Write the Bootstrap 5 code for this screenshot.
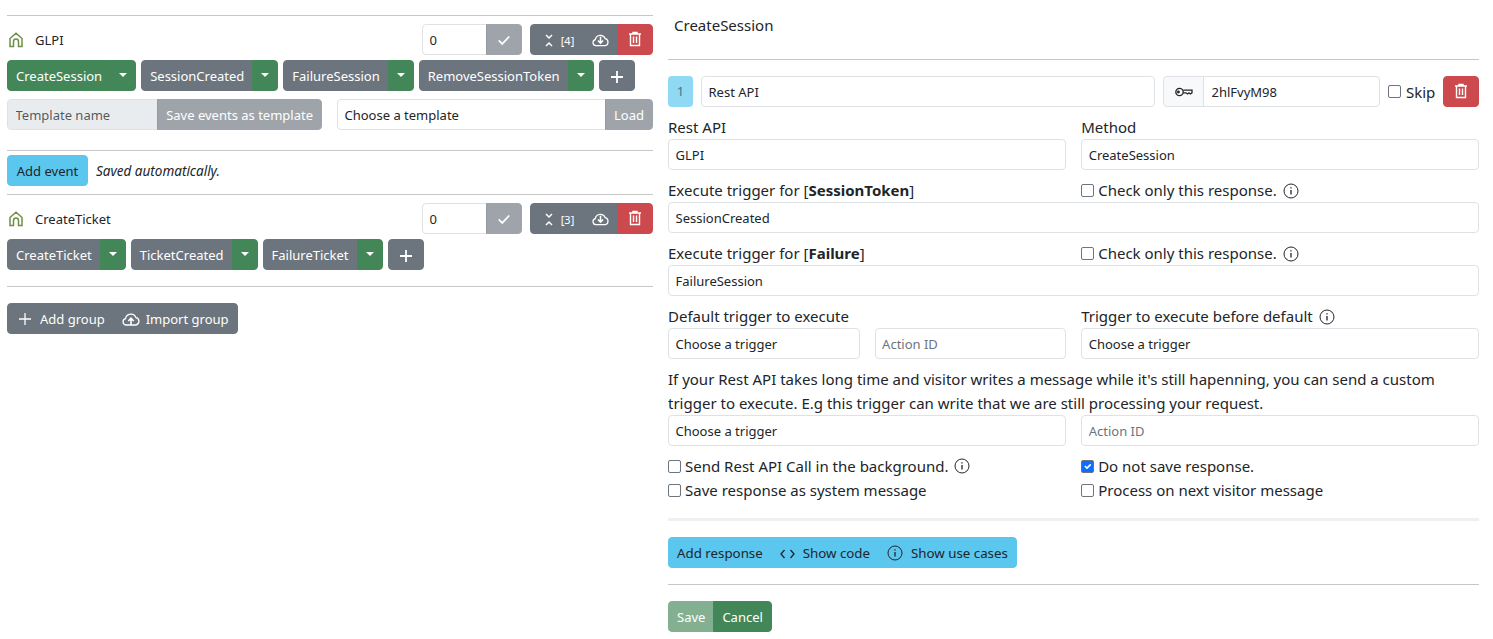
<!DOCTYPE html>
<html>
<head>
  <title>Rest API events</title>
  <link href="https://cdn.jsdelivr.net/npm/bootstrap@5.3.1/dist/css/bootstrap.min.css" rel="stylesheet">
  <style>
    body { font-family: "Noto Sans", sans-serif; font-size: 15px; line-height: 24px; color: #212529; background: #fff; }
    .btn-sm, .btn-group-sm > .btn, .form-control-sm, .input-group-sm > .btn, .input-group-sm > .form-control, .input-group-sm > .input-group-text { font-size: 13px; line-height: 21px; --bs-btn-font-size: 13px; }
    .btn-sm, .btn-group-sm > .btn, .input-group-sm > .btn { padding-top: 5px; padding-bottom: 3px; }
    .form-control-sm, .input-group-sm > .form-control { padding: 5px 6.5px 3px; min-height: 31px; }
    .form-control-sm::placeholder { color: #6c757d; }
    hr { margin: 0; border-top: 1px solid #000; opacity: .22; }
    svg { vertical-align: -2px; }
    .wrap { display: flex; gap: 15px; padding: 0 14px 0 7px; }
    .left-pane { width: 646px; flex: none; padding-top: 15px; }
    .right-pane { flex: 1; padding-top: 13px; }
    .group-head { display: flex; align-items: center; height: 31px; }
    .group-icon { margin-left: 2px; }
    .group-name { font-size: 13px; line-height: 21px; margin: 2px 0 0 12px; }
    .count-box { width: 100px; }
    .tool-box { width: 123px; margin-left: 8px; }
    .btn-group-sm > .btn.tool-fold { padding-left: 5px; }
    .tag-count { font-size: 11px; }
    .btn-grn { --bs-btn-color: #fff; --bs-btn-bg: #438759; --bs-btn-border-color: #438759; --bs-btn-hover-color: #fff; --bs-btn-hover-bg: #3a7a4e; --bs-btn-hover-border-color: #3a7a4e; --bs-btn-disabled-color: #fff; --bs-btn-disabled-bg: #438759; --bs-btn-disabled-border-color: #438759; }
    .btn-gry { --bs-btn-color: #fff; --bs-btn-bg: #6c757d; --bs-btn-border-color: #6c757d; --bs-btn-disabled-color: #fff; --bs-btn-disabled-bg: #6c757d; --bs-btn-disabled-border-color: #6c757d; }
    .btn-sky { --bs-btn-color: #212529; --bs-btn-bg: #5bc6ee; --bs-btn-border-color: #5bc6ee; --bs-btn-hover-color: #212529; --bs-btn-hover-bg: #4cb9e2; --bs-btn-hover-border-color: #4cb9e2; }
    .btn-red { --bs-btn-color: #fff; --bs-btn-bg: #cc4a4d; --bs-btn-border-color: #cc4a4d; --bs-btn-hover-color: #fff; --bs-btn-hover-bg: #b94144; --bs-btn-hover-border-color: #b94144; }
    .btn-group-sm > .btn.dropdown-toggle-split { width: 26px; flex: none; padding: 4px 0; }
    .dropdown-toggle::after { border-top-width: 4px; border-left-width: 4px; border-right-width: 4px; }
    .event-row { display: flex; gap: 5px; margin-top: 5px; }
    .template-row { display: flex; gap: 15px; margin-top: 8px; }
    .template-name { width: 315px; flex: none; }
    .template-name > .form-control { padding-left: 7.5px; }
    .add-row { display: flex; align-items: center; margin: 4px 0 8px; }
    .add-event { width: 81px; }
    .note { font-size: 13.5px; font-style: italic; margin-left: 8px; }
    .btn-group-sm > .btn.add-group { padding-left: 11px; padding-right: 8px; }
    .btn-group-sm > .btn.add-group svg { margin-right: 9px; }
    .import-group svg { margin-right: 6px; }
    .head-title { font-size: 15px; line-height: 24px; margin: 0 0 22px 6px; }
    .num-tag { width: 25px; height: 31px; flex: none; background: #90d9f4; color: #41758a; border-radius: 4px; font-size: 13px; line-height: 31px; text-align: center; }
    .top-row { display: flex; gap: 8px; align-items: center; margin: 16px 0 11px; }
    .top-row .api-name { width: 454px; flex: none; }
    .top-row .key-box { width: 217px; flex: none; }
    .key-box .input-group-text { width: 41px; justify-content: center; padding: 0; background: #f8f9fa; }
    .key-box > .form-control { padding-left: 7.5px; }
    .skip-box { display: flex; align-items: center; }
    .skip-box .form-check-input { margin: 0 5px 0 0; width: 13px; height: 13px; border-radius: 2px; border-color: #6c757d; }
    .form-line { --bs-gutter-x: 15px; --bs-gutter-y: 0; margin-bottom: 11px; }
    .line-label { display: block; line-height: 19px; padding-bottom: 2px; }
    .chk { display: flex; align-items: center; line-height: 19px; padding-bottom: 2px; }
    .chk .form-check-input { width: 13px; height: 13px; margin: 0 4px 0 0; border-radius: 2px; flex: none; border-color: #6c757d; }
    .chk svg { margin-left: 6px; }
    .help-text { margin: -3px 0 0; line-height: 24px; }
    .chk-lines { --bs-gutter-x: 15px; margin-top: 8px; margin-bottom: 16px; }
    .chk-lines .chk { line-height: 24px; padding-bottom: 0; }
    .thick-line { border-top: 3px solid #000; opacity: .06; }
    .resp-group { margin: 16px 0; }
    .resp-group > .btn { font-size: 13.3px; --bs-btn-font-size: 13.3px; }
  </style>
</head>
<body>
<div class="wrap">
  <div class="left-pane">
    <hr>
    <div class="group-head mt-2">
      <svg width="14" height="16" viewBox="0 0 14 16" fill="none" stroke="#6f8f46" stroke-width="1.5" class="group-icon"><path d="M1 6.5 7 1.2l6 5.3v8H9.5V9.5a2.5 2.5 0 0 0-5 0v5H1z"/></svg>
      <span class="group-name">GLPI</span>
      <div class="input-group input-group-sm count-box ms-auto">
        <input class="form-control" value="0">
        <button class="btn btn-gry px-0" disabled style="width:36px"><svg width="14" height="14" viewBox="0 0 16 16" fill="none" stroke="#fff" stroke-width="2"><path d="M2 8.5 6 12.5 14 4"/></svg></button>
      </div>
      <div class="btn-group btn-group-sm tool-box">
        <button class="btn btn-gry tool-fold pe-0 d-flex align-items-center justify-content-center gap-2"><svg width="8" height="13" viewBox="0 0 8 13" fill="none" stroke="#fff" stroke-width="1.5"><path d="M1 1 4 4 7 1M1 12 4 9 7 12"/></svg><span class="tag-count">[4]</span></button>
        <button class="btn btn-gry px-0" style="flex:none;width:35px"><svg width="17" height="14" viewBox="0 0 18 14" fill="none" stroke="#fff" stroke-width="1.3"><path d="M4.5 13H4a3.2 3.2 0 0 1-.5-6.3A5.5 5.5 0 0 1 14 5.6 3.8 3.8 0 0 1 14 13H4.5z"/><path d="M9 3.5V10M6.3 7.5 9 10.3l2.7-2.8" stroke-width="1.6"/></svg></button>
        <button class="btn btn-red px-0" style="flex:none;width:36px"><svg width="14" height="16" viewBox="0 0 14 16" fill="none" stroke="#fff" stroke-width="1.4"><path d="M1 3h12M5 3V1.5h4V3M2.5 3v11.5h9V3M5.5 5.5v6.5M8.5 5.5v6.5"/></svg></button>
      </div>
    </div>
    <div class="event-row">
      <div class="btn-group btn-group-sm"><button class="btn btn-grn">CreateSession</button><button class="btn btn-grn dropdown-toggle dropdown-toggle-split"></button></div>
      <div class="btn-group btn-group-sm"><button class="btn btn-gry">SessionCreated</button><button class="btn btn-grn dropdown-toggle dropdown-toggle-split"></button></div>
      <div class="btn-group btn-group-sm"><button class="btn btn-gry">FailureSession</button><button class="btn btn-grn dropdown-toggle dropdown-toggle-split"></button></div>
      <div class="btn-group btn-group-sm"><button class="btn btn-gry">RemoveSessionToken</button><button class="btn btn-grn dropdown-toggle dropdown-toggle-split"></button></div>
      <button class="btn btn-sm btn-gry" style="width:36px"><svg width="12" height="12" viewBox="0 0 12 12" stroke="#fff" stroke-width="1.8"><path d="M6 0v12M0 6h12"/></svg></button>
    </div>
    <div class="template-row">
      <div class="input-group input-group-sm template-name">
        <input class="form-control" placeholder="Template name" disabled>
        <button class="btn btn-gry" disabled>Save events as template</button>
      </div>
      <div class="input-group input-group-sm">
        <input class="form-control" value="Choose a template">
        <button class="btn btn-gry" disabled>Load</button>
      </div>
    </div>
    <hr style="margin-top:20px">
    <div class="add-row">
      <button class="btn btn-sm btn-sky add-event">Add event</button>
      <span class="note">Saved automatically.</span>
    </div>
    <hr>
    <div class="group-head" style="margin-top:8px">
      <svg width="14" height="16" viewBox="0 0 14 16" fill="none" stroke="#6f8f46" stroke-width="1.5" class="group-icon"><path d="M1 6.5 7 1.2l6 5.3v8H9.5V9.5a2.5 2.5 0 0 0-5 0v5H1z"/></svg>
      <span class="group-name">CreateTicket</span>
      <div class="input-group input-group-sm count-box ms-auto">
        <input class="form-control" value="0">
        <button class="btn btn-gry px-0" disabled style="width:36px"><svg width="14" height="14" viewBox="0 0 16 16" fill="none" stroke="#fff" stroke-width="2"><path d="M2 8.5 6 12.5 14 4"/></svg></button>
      </div>
      <div class="btn-group btn-group-sm tool-box">
        <button class="btn btn-gry tool-fold pe-0 d-flex align-items-center justify-content-center gap-2"><svg width="8" height="13" viewBox="0 0 8 13" fill="none" stroke="#fff" stroke-width="1.5"><path d="M1 1 4 4 7 1M1 12 4 9 7 12"/></svg><span class="tag-count">[3]</span></button>
        <button class="btn btn-gry px-0" style="flex:none;width:35px"><svg width="17" height="14" viewBox="0 0 18 14" fill="none" stroke="#fff" stroke-width="1.3"><path d="M4.5 13H4a3.2 3.2 0 0 1-.5-6.3A5.5 5.5 0 0 1 14 5.6 3.8 3.8 0 0 1 14 13H4.5z"/><path d="M9 3.5V10M6.3 7.5 9 10.3l2.7-2.8" stroke-width="1.6"/></svg></button>
        <button class="btn btn-red px-0" style="flex:none;width:36px"><svg width="14" height="16" viewBox="0 0 14 16" fill="none" stroke="#fff" stroke-width="1.4"><path d="M1 3h12M5 3V1.5h4V3M2.5 3v11.5h9V3M5.5 5.5v6.5M8.5 5.5v6.5"/></svg></button>
      </div>
    </div>
    <div class="event-row">
      <div class="btn-group btn-group-sm"><button class="btn btn-gry">CreateTicket</button><button class="btn btn-grn dropdown-toggle dropdown-toggle-split"></button></div>
      <div class="btn-group btn-group-sm"><button class="btn btn-gry">TicketCreated</button><button class="btn btn-grn dropdown-toggle dropdown-toggle-split"></button></div>
      <div class="btn-group btn-group-sm"><button class="btn btn-gry">FailureTicket</button><button class="btn btn-grn dropdown-toggle dropdown-toggle-split"></button></div>
      <button class="btn btn-sm btn-gry" style="width:36px"><svg width="12" height="12" viewBox="0 0 12 12" stroke="#fff" stroke-width="1.8"><path d="M6 0v12M0 6h12"/></svg></button>
    </div>
    <hr style="margin:16px 0">
    <div class="btn-group btn-group-sm">
      <button class="btn btn-gry add-group"><svg width="12" height="12" viewBox="0 0 12 12" stroke="#fff" stroke-width="1.3" style="vertical-align:-1px"><path d="M6 0v12M0 6h12"/></svg>Add group</button>
      <button class="btn btn-gry import-group"><svg width="18" height="14" viewBox="0 0 18 14" fill="none" stroke="#fff" stroke-width="1.3"><path d="M4.5 13H4a3.2 3.2 0 0 1-.5-6.3A5.5 5.5 0 0 1 14 5.6 3.8 3.8 0 0 1 14 13H4.5z"/><path d="M9 13V6.5M6.3 9 9 6.2 11.7 9" stroke-width="1.6"/></svg>Import group</button>
    </div>
  </div>

  <div class="right-pane">
    <div class="head-title">CreateSession</div>
    <hr>
    <div class="top-row">
      <div class="num-tag">1</div>
      <input class="form-control form-control-sm api-name" value="Rest API">
      <div class="input-group input-group-sm key-box">
        <span class="input-group-text"><svg width="18" height="10" viewBox="0 0 18 10" fill="none" stroke="#212529" stroke-width="1.3"><circle cx="4.5" cy="5" r="3.7"/><circle cx="3.4" cy="5" r=".8"/><path d="M8.2 3.2H17V5.8L15.4 7 14 5.8 12.6 7 11 5.8H8.2"/></svg></span>
        <input class="form-control" value="2hlFvyM98">
      </div>
      <label class="skip-box"><input type="checkbox" class="form-check-input">Skip</label>
      <button class="btn btn-sm btn-red px-0" style="width:36px"><svg width="14" height="16" viewBox="0 0 14 16" fill="none" stroke="#fff" stroke-width="1.4"><path d="M1 3h12M5 3V1.5h4V3M2.5 3v11.5h9V3M5.5 5.5v6.5M8.5 5.5v6.5"/></svg></button>
    </div>
    <div class="row form-line">
      <div class="col-6"><label class="line-label">Rest API</label><input class="form-control form-control-sm" value="GLPI"></div>
      <div class="col-6"><label class="line-label">Method</label><input class="form-control form-control-sm" value="CreateSession"></div>
    </div>
    <div class="row form-line">
      <div class="col-6"><label class="line-label">Execute trigger for [<b>SessionToken</b>]</label></div>
      <div class="col-6"><label class="chk"><input type="checkbox" class="form-check-input">Check only this response.<svg width="16" height="16" viewBox="0 0 16 16" fill="none" stroke="#212529"><circle cx="8" cy="8" r="7"/><path d="M8 7v4.5M8 4.2v1.3" stroke-width="1.3"/></svg></label></div>
      <div class="col-12"><input class="form-control form-control-sm" value="SessionCreated"></div>
    </div>
    <div class="row form-line">
      <div class="col-6"><label class="line-label">Execute trigger for [<b>Failure</b>]</label></div>
      <div class="col-6"><label class="chk"><input type="checkbox" class="form-check-input">Check only this response.<svg width="16" height="16" viewBox="0 0 16 16" fill="none" stroke="#212529"><circle cx="8" cy="8" r="7"/><path d="M8 7v4.5M8 4.2v1.3" stroke-width="1.3"/></svg></label></div>
      <div class="col-12"><input class="form-control form-control-sm" value="FailureSession"></div>
    </div>
    <div class="row form-line">
      <div class="col-6">
        <label class="line-label">Default trigger to execute</label>
        <div class="row" style="--bs-gutter-x:15px">
          <div class="col-6"><input class="form-control form-control-sm" value="Choose a trigger"></div>
          <div class="col-6"><input class="form-control form-control-sm" placeholder="Action ID"></div>
        </div>
      </div>
      <div class="col-6">
        <label class="chk">Trigger to execute before default<svg width="16" height="16" viewBox="0 0 16 16" fill="none" stroke="#212529"><circle cx="8" cy="8" r="7"/><path d="M8 7v4.5M8 4.2v1.3" stroke-width="1.3"/></svg></label>
        <input class="form-control form-control-sm" value="Choose a trigger">
      </div>
    </div>
    <p class="help-text">If your Rest API takes long time and visitor writes a message while it's still hapenning, you can send a custom trigger to execute. E.g this trigger can write that we are still processing your request.</p>
    <div class="row" style="--bs-gutter-x:15px">
      <div class="col-6"><input class="form-control form-control-sm" value="Choose a trigger"></div>
      <div class="col-6"><input class="form-control form-control-sm" placeholder="Action ID"></div>
    </div>
    <div class="row chk-lines">
      <div class="col-6">
        <label class="chk"><input type="checkbox" class="form-check-input">Send Rest API Call in the background.<svg width="16" height="16" viewBox="0 0 16 16" fill="none" stroke="#212529"><circle cx="8" cy="8" r="7"/><path d="M8 7v4.5M8 4.2v1.3" stroke-width="1.3"/></svg></label>
        <label class="chk"><input type="checkbox" class="form-check-input">Save response as system message</label>
      </div>
      <div class="col-6">
        <label class="chk"><input type="checkbox" class="form-check-input" checked>Do not save response.</label>
        <label class="chk"><input type="checkbox" class="form-check-input">Process on next visitor message</label>
      </div>
    </div>
    <hr class="thick-line">
    <div class="btn-group btn-group-sm resp-group">
      <button class="btn btn-sky">Add response</button>
      <button class="btn btn-sky"><svg width="15" height="10" viewBox="0 0 15 10" fill="none" stroke="#212529" stroke-width="1.3" class="me-2" style="vertical-align:-0.5px"><path d="M4.5 1 1 5l3.5 4M10.5 1 14 5l-3.5 4"/></svg>Show code</button>
      <button class="btn btn-sky"><svg width="16" height="16" viewBox="0 0 16 16" fill="none" stroke="#212529" class="me-2" style="vertical-align:-3px"><circle cx="8" cy="8" r="7"/><path d="M8 7v4.5M8 4.2v1.3" stroke-width="1.3"/></svg>Show use cases</button>
    </div>
    <hr>
    <div class="btn-group btn-group-sm" style="margin-top:16px">
      <button class="btn btn-grn" disabled>Save</button>
      <button class="btn btn-grn">Cancel</button>
    </div>
  </div>
</div>
<script src="https://cdn.jsdelivr.net/npm/bootstrap@5.3.1/dist/js/bootstrap.bundle.min.js"></script>
</body>
</html>
